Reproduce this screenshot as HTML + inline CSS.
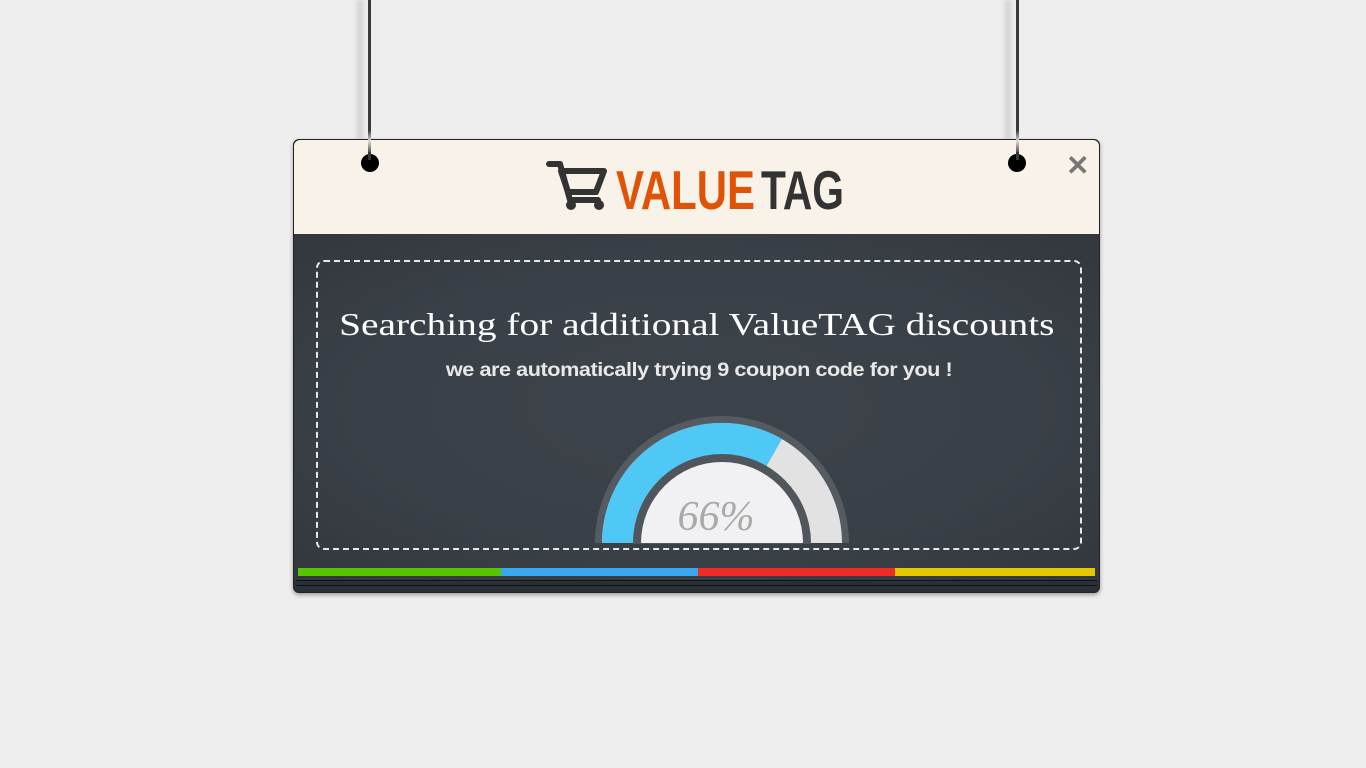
<!DOCTYPE html>
<html><head><meta charset="utf-8"><style>
html,body{margin:0;padding:0;width:1366px;height:768px;background:#eeeeee;overflow:hidden;position:relative;font-family:"Liberation Sans",sans-serif}
.rope{position:absolute;top:0;width:3px;height:160px;background:#3a3a3a}
.rshadow{position:absolute;top:0;width:10px;height:140px;background:linear-gradient(90deg,rgba(0,0,0,0),rgba(0,0,0,.15),rgba(0,0,0,0));filter:blur(2px)}
.card{position:absolute;left:293px;top:139px;width:805px;height:452px;border-radius:6px;background:#2b3036;box-shadow:0 2px 4px rgba(0,0,0,.35);border:1px solid #222}
.head{position:absolute;left:0;top:0;width:805px;height:94px;background:#f8f2e8;border-radius:6px 6px 0 0}
.body{position:absolute;left:0;top:94px;width:805px;height:346px;background:radial-gradient(ellipse at center,#3d434a 0%,#3a4047 60%,#32373d 100%)}
.dash{position:absolute;left:22px;top:26px;width:762px;height:286px;border:2px dashed #e8e8e8;border-radius:8px}
.hole{position:absolute;width:18px;height:18px;border-radius:50%;background:#000}
.bar{position:absolute;top:428px;height:8px}
.t{position:absolute;left:0;width:805px;text-align:center}
.t span{display:inline-block}
h1{margin:0;font:normal 32px "Liberation Serif",serif;color:#fff}
.sub{font-weight:bold;font-size:19px;color:#e8e8e8;letter-spacing:-0.4px}
</style></head><body>
<div class="rshadow" style="left:355px"></div>
<div class="rshadow" style="left:1003px"></div>
<div class="card">
 <div class="head">
  <svg style="position:absolute;left:250px;top:20px" width="300" height="55">
   <path d="M5 4 H16 L26 40 H54" fill="none" stroke="#333" stroke-width="6" stroke-linecap="round" stroke-linejoin="round"/>
   <path d="M17 11 H60 L52 32 H24 Z" fill="none" stroke="#333" stroke-width="6" stroke-linejoin="round"/>
   <circle cx="27" cy="45" r="5" fill="#333"/><circle cx="55" cy="45" r="5" fill="#333"/>
  </svg>
  <svg style="position:absolute;left:320px;top:22px" width="240" height="55">
   <text x="2" y="47" font-family="Liberation Sans" font-weight="bold" font-size="55" fill="#e05206" textLength="139" lengthAdjust="spacingAndGlyphs">VALUE</text>
   <text x="147" y="47" font-family="Liberation Sans" font-weight="bold" font-size="55" fill="#333" textLength="83" lengthAdjust="spacingAndGlyphs">TAG</text>
  </svg>
  <div style="position:absolute;left:772px;top:9px;font-size:28px;font-weight:bold;color:#777">✕</div>
 </div>
 <div class="body">
  <div class="dash"></div>
  <svg style="position:absolute;left:300px;top:180px" width="260" height="130">
   <path d="M1 129 A127 127 0 0 1 255 129 Z" fill="#555b61"/>
   <path d="M8 129 A120 120 0 0 1 248 129 L216 129 A88 88 0 0 0 40 129 Z" fill="#e2e2e2"/>
   <path d="M8 129 A120 120 0 0 1 188 25 L172 53 A88 88 0 0 0 40 129 Z" fill="#4fc8f6"/>
   <circle cx="128" cy="129" r="89" fill="#50565c"/>
   <path d="M47 129 A81 81 0 0 1 209 129 Z" fill="#f1f1f3"/>
   <text x="122" y="116" text-anchor="middle" font-family="Liberation Serif" font-style="italic" font-size="42" fill="#aaa">66%</text>
  </svg>
 </div>
 <div class="t" style="top:166px"><h1><span style="transform:scaleX(1.23)">Searching for additional ValueTAG discounts</span></h1></div>
 <div class="t" style="top:220px;left:3px"><span class="sub" style="transform:scaleX(1.14)">we are automatically trying 9 coupon code for you !</span></div>
 <div class="bar" style="left:4px;width:203px;background:#56c400"></div>
 <div class="bar" style="left:207px;width:197px;background:#3aa8f0"></div>
 <div class="bar" style="left:404px;width:197px;background:#ee2b24"></div>
 <div class="bar" style="left:601px;width:200px;background:#e6c800"></div>
 <div style="position:absolute;left:2px;top:440px;width:801px;height:1px;background:#111"></div>
 <div style="position:absolute;left:2px;top:445px;width:801px;height:1px;background:#111"></div>
 <div class="hole" style="left:67px;top:14px"></div>
 <div class="hole" style="left:714px;top:14px"></div>
</div>
<div class="rope" style="left:368px"></div>
<div class="rope" style="left:1016px"></div>
<div style="position:absolute;left:368px;top:130px;width:3px;height:22px;background:linear-gradient(#333,#ddd,#555)"></div>
<div style="position:absolute;left:1016px;top:130px;width:3px;height:22px;background:linear-gradient(#333,#ddd,#555)"></div>
</body></html>
